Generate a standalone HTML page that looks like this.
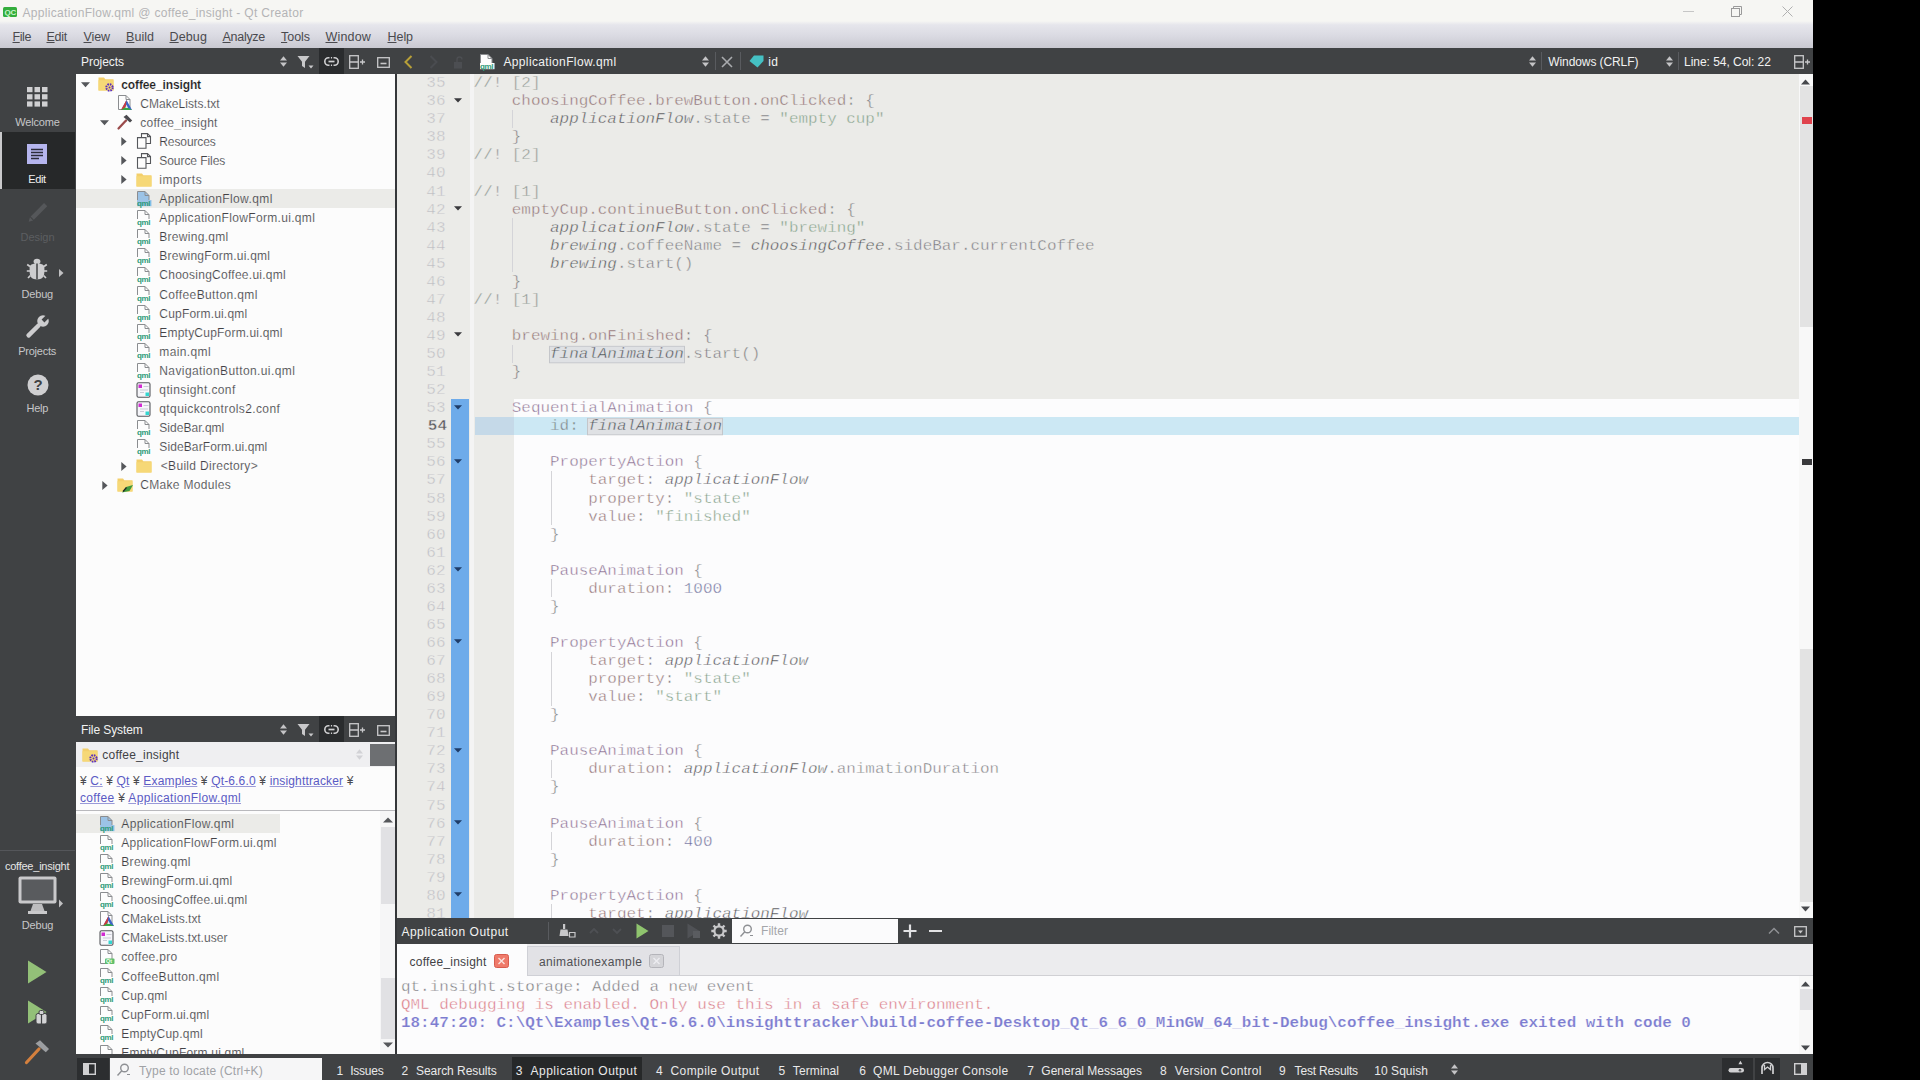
<!DOCTYPE html>
<html lang="en"><head><meta charset="utf-8"><title>ApplicationFlow.qml @ coffee_insight - Qt Creator</title>
<style>
html,body{margin:0;padding:0;background:#000;}
body{width:1920px;height:1080px;overflow:hidden;position:relative;font-family:"Liberation Sans",sans-serif;font-size:12px;}
#win{position:absolute;left:0;top:0;width:1813px;height:1080px;background:#404244;overflow:hidden;}
.a{position:absolute;}
.t{position:absolute;white-space:pre;line-height:16px;font-size:12px;}
.dark{background:#404244;}
svg{position:absolute;overflow:visible;}
.code{position:absolute;white-space:pre;font-family:"Liberation Mono",monospace;font-size:15.93px;line-height:18px;height:18px;transform:scaleY(0.87);transform-origin:0 13.3px;}
.ln{position:absolute;white-space:pre;font-family:"Liberation Mono",monospace;font-size:16px;line-height:18px;height:18px;width:30px;text-align:right;color:#bcbcc2;-webkit-text-stroke:0.45px #ebebe8;transform:scaleY(0.87);transform-origin:0 13.3px;}
i{font-style:italic;}
</style></head><body><div id="win">
<div class="a" style="left:0;top:0;width:1813px;height:24px;background:#f6f6f3;"></div><div class="a" style="left:3px;top:7px;width:14px;height:10px;background:#33ad3c;border-radius:1.5px;"></div><span class="t" style="left:4.5px;top:6.5px;line-height:11px;font-size:8px;font-weight:700;color:#c9f5cd;letter-spacing:-0.3px;">QC</span><span class="t" style="left:22.5px;top:4.5px;color:#b4b4b6;letter-spacing:0.318px;">ApplicationFlow.qml @ coffee_insight - Qt Creator</span><div class="a" style="left:1683px;top:11px;width:11px;height:1px;background:#c6c6c6;"></div><svg style="left:1731px;top:6px" width="12" height="12" viewBox="0 0 12 12" fill="none" stroke="#9a9a9a" stroke-width="1"><rect x="0.5" y="2.5" width="8" height="8"/><path d="M2.5 2.5V0.5H10.5V8.5H8.5"/></svg><svg style="left:1782px;top:6px" width="11" height="11" viewBox="0 0 11 11" fill="none" stroke="#b0b0b0" stroke-width="1"><path d="M0.5 0.5L10.5 10.5M10.5 0.5L0.5 10.5"/></svg><div class="a" style="left:0;top:21px;width:1813px;height:27px;background:linear-gradient(#f6f6f3,#e6e6ec 14%,#dadae2 55%,#c9c9d1);"></div><span class="t" style="left:12.5px;top:29.3px;color:#4a4a4e;font-size:12.5px;letter-spacing:-0.414px;"><u style="text-decoration-thickness:1px;text-underline-offset:1px">F</u>ile</span><span class="t" style="left:46.5px;top:29.3px;color:#4a4a4e;font-size:12.5px;letter-spacing:-0.262px;"><u style="text-decoration-thickness:1px;text-underline-offset:1px">E</u>dit</span><span class="t" style="left:83.5px;top:29.3px;color:#4a4a4e;font-size:12.5px;letter-spacing:-0.094px;"><u style="text-decoration-thickness:1px;text-underline-offset:1px">V</u>iew</span><span class="t" style="left:126.0px;top:29.3px;color:#4a4a4e;font-size:12.5px;letter-spacing:0.041px;"><u style="text-decoration-thickness:1px;text-underline-offset:1px">B</u>uild</span><span class="t" style="left:169.5px;top:29.3px;color:#4a4a4e;font-size:12.5px;letter-spacing:0.131px;"><u style="text-decoration-thickness:1px;text-underline-offset:1px">D</u>ebug</span><span class="t" style="left:222.5px;top:29.3px;color:#4a4a4e;font-size:12.5px;letter-spacing:-0.283px;"><u style="text-decoration-thickness:1px;text-underline-offset:1px">A</u>nalyze</span><span class="t" style="left:281.0px;top:29.3px;color:#4a4a4e;font-size:12.5px;letter-spacing:-0.037px;"><u style="text-decoration-thickness:1px;text-underline-offset:1px">T</u>ools</span><span class="t" style="left:325.5px;top:29.3px;color:#4a4a4e;font-size:12.5px;letter-spacing:0.172px;"><u style="text-decoration-thickness:1px;text-underline-offset:1px">W</u>indow</span><span class="t" style="left:387.5px;top:29.3px;color:#4a4a4e;font-size:12.5px;letter-spacing:-0.055px;"><u style="text-decoration-thickness:1px;text-underline-offset:1px">H</u>elp</span><div class="a dark" style="left:0;top:48px;width:1813px;height:26px;"></div><div class="a dark" style="left:0;top:74px;width:76px;height:1006px;"></div><div class="a" style="left:0;top:132px;width:75px;height:57px;background:#262829;"></div><div class="a" style="left:0;top:132px;width:2px;height:57px;background:#c9c9cb;"></div><svg style="left:27px;top:87px" width="21" height="20" fill="#d0d0d2"><rect x="0.0" y="0.0" width="5.5" height="5.2"/><rect x="7.5" y="0.0" width="5.5" height="5.2"/><rect x="15.0" y="0.0" width="5.5" height="5.2"/><rect x="0.0" y="7.2" width="5.5" height="5.2"/><rect x="7.5" y="7.2" width="5.5" height="5.2"/><rect x="15.0" y="7.2" width="5.5" height="5.2"/><rect x="0.0" y="14.4" width="5.5" height="5.2"/><rect x="7.5" y="14.4" width="5.5" height="5.2"/><rect x="15.0" y="14.4" width="5.5" height="5.2"/></svg><span class="t" style="left:15.3px;top:113.6px;color:#c6c6c8;font-size:11px;letter-spacing:-0.179px;">Welcome</span><svg style="left:27px;top:144px" width="20" height="20"><rect width="20" height="20" fill="#b5b5ee"/><g stroke="#2c2c3a" stroke-width="1.3"><path d="M4 5.5H16M4 8.5H16M4 11.5H16M4 14.5H12"/></g></svg><span class="t" style="left:28.3px;top:171.2px;color:#f0f0f0;font-size:11px;letter-spacing:-0.367px;">Edit</span><svg style="left:24px;top:200px" width="26" height="26" viewBox="0 0 26 26"><g transform="rotate(45 13 13)" fill="#55575a"><rect x="11" y="1" width="4.5" height="19"/><path d="M11 21h4.5l-2.25 4z"/></g></svg><span class="t" style="left:20.5px;top:228.6px;color:#5c5e61;font-size:11px;letter-spacing:-0.042px;">Design</span><svg style="left:26px;top:258px" width="22" height="22" viewBox="0 0 22 22" fill="#cdcdcf"><ellipse cx="11" cy="3.6" rx="3.4" ry="2.8"/><path d="M3.6 9.500Q3.600 5.600 11 5.600Q18.400 5.600 18.400 9.500V14Q18.400 21.500 11 21.500Q3.600 21.500 3.600 14z"/><path d="M11 5.500V21.500" stroke="#404244" stroke-width="1.500"/><g stroke="#cdcdcf" stroke-width="1.700" fill="none"><path d="M4 8.500L1.200 6.500M4 13H0.800M4.500 17.500L2 20M18 8.500l2.800-2M18 13h3.200M17.500 17.500l2.500 2.500"/></g></svg><svg style="left:58.5px;top:269px" width="5" height="8"><path d="M0 0L4.5 4L0 8z" fill="#c0c0c2"/></svg><span class="t" style="left:21.4px;top:285.8px;color:#c6c6c8;font-size:11px;letter-spacing:-0.144px;">Debug</span><svg style="left:25px;top:315px" width="24" height="24" viewBox="0 0 24 24"><g transform="rotate(45 12 12)"><rect x="9.800" y="8" width="4.400" height="18" rx="1.800" fill="#cdcdcf"/><circle cx="12" cy="3.500" r="5.800" fill="#cdcdcf"/><rect x="10" y="-3.500" width="4" height="7" fill="#404244"/></g></svg><span class="t" style="left:18.2px;top:343.0px;color:#c6c6c8;font-size:11px;letter-spacing:-0.244px;">Projects</span><svg style="left:26.500px;top:374px" width="22" height="22" viewBox="0 0 22 22"><circle cx="11" cy="11" r="10.500" fill="#cfcfd1"/><text x="11" y="16.2" text-anchor="middle" font-family="Liberation Sans,sans-serif" font-weight="700" font-size="15" fill="#404244">?</text></svg><span class="t" style="left:26.6px;top:400.4px;color:#c6c6c8;font-size:11px;letter-spacing:-0.281px;">Help</span><div class="a" style="left:0;top:850px;width:75px;height:1px;background:#54565a;"></div><span class="t" style="left:4.9px;top:858.0px;color:#e6e6e6;font-size:11px;letter-spacing:-0.235px;">coffee_insight</span><svg style="left:18px;top:876px" width="46" height="39" viewBox="0 0 46 39"><rect x="0.5" y="0.5" width="38" height="27" rx="2" fill="#c9c9cb"/><rect x="3.5" y="3.5" width="32" height="21" fill="#595b5e"/><path d="M15 28h9l2.5 7H12.5z" fill="#bdbdbf"/><rect x="10" y="35" width="19" height="3" fill="#c9c9cb"/><path d="M41 23.5L45 27.5L41 31.5z" fill="#c0c0c2"/></svg><span class="t" style="left:21.8px;top:916.6px;color:#c6c6c8;font-size:11px;letter-spacing:-0.184px;">Debug</span><svg style="left:27px;top:960px" width="20" height="24"><path d="M1 0.5L19.5 12L1 23.5z" fill="#93c078"/></svg><svg style="left:27px;top:1000px" width="22" height="25"><path d="M1 0.5L19.5 12L1 23.5z" fill="#93c078"/><g fill="#d4d4d6" stroke="#404244" stroke-width="1"><rect x="9" y="13.5" width="11" height="10.5" rx="2"/><rect x="12" y="10.5" width="5" height="4" rx="1.5"/></g><path d="M14.5 14.5V24" stroke="#404244" stroke-width="1.2"/></svg><svg style="left:24px;top:1039px" width="26" height="26" viewBox="0 0 26 26"><path d="M2.5 23.5L15 10" stroke="#d4803e" stroke-width="3.2" stroke-linecap="round"/><path d="M11.5 4.5L16 1.2L25 10L21.8 13.2z" fill="#9c9ea1"/></svg><span class="t" style="left:81.0px;top:53.8px;color:#f2f2f2;letter-spacing:-0.045px;">Projects</span><svg style="left:280.0px;top:56.0px" width="7" height="11" fill="#c4c4c6"><path d="M3.5 0.3L7 4.4H0z"/><path d="M3.5 10.7L7 6.6H0z"/></svg><svg style="left:297px;top:54.5px" width="17" height="14" fill="#c8c8ca"><path d="M0.5 1h12L8 6.8V13L5 11V6.8z"/><path d="M11.5 10.5h5l-2.5 3z"/></svg><div class="a" style="left:319px;top:48px;width:25px;height:26px;background:#2a2c2e;"></div><svg style="left:323.5px;top:57.0px" width="15" height="9" fill="none" stroke="#d0d0d2" stroke-width="1.6"><rect x="0.8" y="0.8" width="13.4" height="7.4" rx="3.7"/><path d="M6.2 0v9M8.800 0v9" stroke="#2a2c2e" stroke-width="1.400"/><path d="M4.500 4.500h6" stroke-width="1.700"/></svg><svg style="left:349px;top:54.5px" width="17" height="14" fill="none" stroke="#c8c8ca" stroke-width="1.3"><rect x="0.7" y="0.7" width="8.6" height="12.6"/><path d="M0.7 7H9.3M11 7h5M13.5 4.5v5"/></svg><svg style="left:376.5px;top:56.5px" width="13" height="11" fill="none" stroke="#c8c8ca" stroke-width="1.3"><rect x="0.7" y="0.7" width="11.6" height="9.6"/><path d="M3.5 6.5h6" stroke-width="1.6"/></svg><div class="a" style="left:76px;top:74px;width:320px;height:642px;background:#fcfcfc;"></div><div class="a" style="left:76px;top:189px;width:320px;height:19px;background:#ebebe8;"></div><svg style="left:80.50px;top:81.85px" width="9" height="5.8"><path d="M0 0.2H9L4.5 5.3z" fill="#55575b"/></svg><svg style="left:98px;top:76px" width="17" height="16" viewBox="0 0 17 16"><path d="M0.5 1.5h5.5l1.3 1.8H15.5V14.5H0.5z" fill="#f3cf6b"/><rect x="0.5" y="4.2" width="15" height="10.3" fill="#f6d877"/><circle cx="11.5" cy="11.5" r="3.2" fill="none" stroke="#5a2fc0" stroke-width="2" stroke-dasharray="1.6 0.9"/><circle cx="11.5" cy="11.5" r="1" fill="#5a2fc0"/></svg><span class="t" style="left:121.3px;top:76.5px;color:#1e1e22;font-weight:700;letter-spacing:-0.119px;-webkit-text-stroke:0.15px #fcfcfc;">coffee_insight</span><svg style="left:117px;top:95px" width="16" height="16" viewBox="0 0 16 16"><path d="M1.5 0.5H9L13 4.5V14.5H1.5z" fill="#fdfdfd" stroke="#8b8d90"/><path d="M9 0.5V4.5H13" fill="none" stroke="#8b8d90"/><path d="M9.5 5L15 15H4z" fill="#3c64c8"/><path d="M9.5 5L4 15H8.2z" fill="#d03a3a"/><path d="M4 15H15L9 11.8z" fill="#38a848"/><path d="M9.5 9.5L11 13H8.3z" fill="#e8e8e8"/></svg><span class="t" style="left:140.3px;top:95.6px;color:#424246;letter-spacing:0.051px;-webkit-text-stroke:0.15px #fcfcfc;">CMakeLists.txt</span><svg style="left:99.50px;top:120.03px" width="9" height="5.8"><path d="M0 0.2H9L4.5 5.3z" fill="#55575b"/></svg><svg style="left:117px;top:114px" width="16" height="16" viewBox="0 0 16 16"><path d="M1.5 14.5L9 6.5" stroke="#9a4a4a" stroke-width="2.2" stroke-linecap="round"/><path d="M6.5 3L9.5 0.8L15.2 6.5L13 8.6z" fill="#4a4a4e"/></svg><span class="t" style="left:140.3px;top:114.7px;color:#424246;letter-spacing:0.254px;-webkit-text-stroke:0.15px #fcfcfc;">coffee_insight</span><svg style="left:120.5px;top:137.26999999999998px" width="6" height="9"><path d="M0.3 0V9L5.6 4.5z" fill="#55575b"/></svg><svg style="left:136px;top:133px" width="16" height="16" viewBox="0 0 16 16" fill="#fdfdfd" stroke="#55575b" stroke-width="1.1"><path d="M5.5 0.6h6l3 3V10.5H5.5z"/><path d="M11.5 0.6v3h3" fill="none"/><path d="M1.5 4.6h6l2.5 0V15.3H1.5z"/></svg><span class="t" style="left:159.3px;top:133.8px;color:#424246;letter-spacing:-0.107px;-webkit-text-stroke:0.15px #fcfcfc;">Resources</span><svg style="left:120.5px;top:156.36px" width="6" height="9"><path d="M0.3 0V9L5.6 4.5z" fill="#55575b"/></svg><svg style="left:136px;top:153px" width="16" height="16" viewBox="0 0 16 16" fill="#fdfdfd" stroke="#55575b" stroke-width="1.1"><path d="M5.5 0.6h6l3 3V10.5H5.5z"/><path d="M11.5 0.6v3h3" fill="none"/><path d="M1.5 4.6h6l2.5 0V15.3H1.5z"/></svg><span class="t" style="left:159.3px;top:152.9px;color:#424246;letter-spacing:-0.067px;-webkit-text-stroke:0.15px #fcfcfc;">Source Files</span><svg style="left:120.5px;top:175.45px" width="6" height="9"><path d="M0.3 0V9L5.6 4.5z" fill="#55575b"/></svg><svg style="left:136px;top:172px" width="17" height="16" viewBox="0 0 17 16"><path d="M0.5 1.5h5.5l1.3 1.8H15.5V14.5H0.5z" fill="#f3cf6b"/><rect x="0.5" y="4.2" width="15" height="10.3" fill="#f6d877"/></svg><span class="t" style="left:159.3px;top:171.9px;color:#424246;letter-spacing:0.508px;-webkit-text-stroke:0.15px #fcfcfc;">imports</span><svg style="left:136px;top:191px" width="16" height="16" viewBox="0 0 16 16"><path d="M1.5 0.5H9L13 4.5V14.5H1.5z" fill="#9cc3e6" stroke="#8b8d90" stroke-width="1"/><path d="M9 0.5V4.5H13" fill="none" stroke="#8b8d90"/><rect x="1" y="9" width="14.5" height="6.2" fill="#9cc3e6"/><text x="1" y="14.6" font-family="Liberation Sans,sans-serif" font-size="8" font-weight="700" fill="#2e9a78" letter-spacing="-0.4">qml</text></svg><span class="t" style="left:159.3px;top:191.0px;color:#424246;letter-spacing:0.386px;-webkit-text-stroke:0.15px #ebebe8;">ApplicationFlow.qml</span><svg style="left:136px;top:210px" width="16" height="16" viewBox="0 0 16 16"><path d="M1.5 0.5H9L13 4.5V14.5H1.5z" fill="#fdfdfd" stroke="#8b8d90" stroke-width="1"/><path d="M9 0.5V4.5H13" fill="none" stroke="#8b8d90"/><rect x="1" y="9" width="14.5" height="6.2" fill="#fdfdfd"/><text x="1" y="14.6" font-family="Liberation Sans,sans-serif" font-size="8" font-weight="700" fill="#2e9a78" letter-spacing="-0.4">qml</text></svg><span class="t" style="left:159.3px;top:210.1px;color:#424246;letter-spacing:0.327px;-webkit-text-stroke:0.15px #fcfcfc;">ApplicationFlowForm.ui.qml</span><svg style="left:136px;top:229px" width="16" height="16" viewBox="0 0 16 16"><path d="M1.5 0.5H9L13 4.5V14.5H1.5z" fill="#fdfdfd" stroke="#8b8d90" stroke-width="1"/><path d="M9 0.5V4.5H13" fill="none" stroke="#8b8d90"/><rect x="1" y="9" width="14.5" height="6.2" fill="#fdfdfd"/><text x="1" y="14.6" font-family="Liberation Sans,sans-serif" font-size="8" font-weight="700" fill="#2e9a78" letter-spacing="-0.4">qml</text></svg><span class="t" style="left:159.3px;top:229.2px;color:#424246;letter-spacing:0.288px;-webkit-text-stroke:0.15px #fcfcfc;">Brewing.qml</span><svg style="left:136px;top:248px" width="16" height="16" viewBox="0 0 16 16"><path d="M1.5 0.5H9L13 4.5V14.5H1.5z" fill="#fdfdfd" stroke="#8b8d90" stroke-width="1"/><path d="M9 0.5V4.5H13" fill="none" stroke="#8b8d90"/><rect x="1" y="9" width="14.5" height="6.2" fill="#fdfdfd"/><text x="1" y="14.6" font-family="Liberation Sans,sans-serif" font-size="8" font-weight="700" fill="#2e9a78" letter-spacing="-0.4">qml</text></svg><span class="t" style="left:159.3px;top:248.3px;color:#424246;letter-spacing:0.233px;-webkit-text-stroke:0.15px #fcfcfc;">BrewingForm.ui.qml</span><svg style="left:136px;top:267px" width="16" height="16" viewBox="0 0 16 16"><path d="M1.5 0.5H9L13 4.5V14.5H1.5z" fill="#fdfdfd" stroke="#8b8d90" stroke-width="1"/><path d="M9 0.5V4.5H13" fill="none" stroke="#8b8d90"/><rect x="1" y="9" width="14.5" height="6.2" fill="#fdfdfd"/><text x="1" y="14.6" font-family="Liberation Sans,sans-serif" font-size="8" font-weight="700" fill="#2e9a78" letter-spacing="-0.4">qml</text></svg><span class="t" style="left:159.3px;top:267.4px;color:#424246;letter-spacing:0.262px;-webkit-text-stroke:0.15px #fcfcfc;">ChoosingCoffee.ui.qml</span><svg style="left:136px;top:286px" width="16" height="16" viewBox="0 0 16 16"><path d="M1.5 0.5H9L13 4.5V14.5H1.5z" fill="#fdfdfd" stroke="#8b8d90" stroke-width="1"/><path d="M9 0.5V4.5H13" fill="none" stroke="#8b8d90"/><rect x="1" y="9" width="14.5" height="6.2" fill="#fdfdfd"/><text x="1" y="14.6" font-family="Liberation Sans,sans-serif" font-size="8" font-weight="700" fill="#2e9a78" letter-spacing="-0.4">qml</text></svg><span class="t" style="left:159.3px;top:286.5px;color:#424246;letter-spacing:0.368px;-webkit-text-stroke:0.15px #fcfcfc;">CoffeeButton.qml</span><svg style="left:136px;top:305px" width="16" height="16" viewBox="0 0 16 16"><path d="M1.5 0.5H9L13 4.5V14.5H1.5z" fill="#fdfdfd" stroke="#8b8d90" stroke-width="1"/><path d="M9 0.5V4.5H13" fill="none" stroke="#8b8d90"/><rect x="1" y="9" width="14.5" height="6.2" fill="#fdfdfd"/><text x="1" y="14.6" font-family="Liberation Sans,sans-serif" font-size="8" font-weight="700" fill="#2e9a78" letter-spacing="-0.4">qml</text></svg><span class="t" style="left:159.3px;top:305.6px;color:#424246;letter-spacing:0.189px;-webkit-text-stroke:0.15px #fcfcfc;">CupForm.ui.qml</span><svg style="left:136px;top:324px" width="16" height="16" viewBox="0 0 16 16"><path d="M1.5 0.5H9L13 4.5V14.5H1.5z" fill="#fdfdfd" stroke="#8b8d90" stroke-width="1"/><path d="M9 0.5V4.5H13" fill="none" stroke="#8b8d90"/><rect x="1" y="9" width="14.5" height="6.2" fill="#fdfdfd"/><text x="1" y="14.6" font-family="Liberation Sans,sans-serif" font-size="8" font-weight="700" fill="#2e9a78" letter-spacing="-0.4">qml</text></svg><span class="t" style="left:159.3px;top:324.7px;color:#424246;letter-spacing:0.212px;-webkit-text-stroke:0.15px #fcfcfc;">EmptyCupForm.ui.qml</span><svg style="left:136px;top:343px" width="16" height="16" viewBox="0 0 16 16"><path d="M1.5 0.5H9L13 4.5V14.5H1.5z" fill="#fdfdfd" stroke="#8b8d90" stroke-width="1"/><path d="M9 0.5V4.5H13" fill="none" stroke="#8b8d90"/><rect x="1" y="9" width="14.5" height="6.2" fill="#fdfdfd"/><text x="1" y="14.6" font-family="Liberation Sans,sans-serif" font-size="8" font-weight="700" fill="#2e9a78" letter-spacing="-0.4">qml</text></svg><span class="t" style="left:159.3px;top:343.8px;color:#424246;letter-spacing:0.377px;-webkit-text-stroke:0.15px #fcfcfc;">main.qml</span><svg style="left:136px;top:363px" width="16" height="16" viewBox="0 0 16 16"><path d="M1.5 0.5H9L13 4.5V14.5H1.5z" fill="#fdfdfd" stroke="#8b8d90" stroke-width="1"/><path d="M9 0.5V4.5H13" fill="none" stroke="#8b8d90"/><rect x="1" y="9" width="14.5" height="6.2" fill="#fdfdfd"/><text x="1" y="14.6" font-family="Liberation Sans,sans-serif" font-size="8" font-weight="700" fill="#2e9a78" letter-spacing="-0.4">qml</text></svg><span class="t" style="left:159.3px;top:362.9px;color:#424246;letter-spacing:0.398px;-webkit-text-stroke:0.15px #fcfcfc;">NavigationButton.ui.qml</span><svg style="left:136px;top:382px" width="16" height="16" viewBox="0 0 16 16"><rect x="1" y="0.8" width="13" height="14.4" rx="1.5" fill="#f6f6fa" stroke="#55575b" stroke-width="1.1"/><rect x="2.5" y="2.5" width="3.5" height="3.5" fill="#d22ad2"/><rect x="9.5" y="10.5" width="3.5" height="3.5" fill="#32d6d0"/><path d="M4 8h8M4 10.5h4M7.5 4.5h5" stroke="#c9cbd6" stroke-width="1"/></svg><span class="t" style="left:159.3px;top:381.9px;color:#424246;letter-spacing:0.406px;-webkit-text-stroke:0.15px #fcfcfc;">qtinsight.conf</span><svg style="left:136px;top:401px" width="16" height="16" viewBox="0 0 16 16"><rect x="1" y="0.8" width="13" height="14.4" rx="1.5" fill="#f6f6fa" stroke="#55575b" stroke-width="1.1"/><rect x="2.5" y="2.5" width="3.5" height="3.5" fill="#d22ad2"/><rect x="9.5" y="10.5" width="3.5" height="3.5" fill="#32d6d0"/><path d="M4 8h8M4 10.5h4M7.5 4.5h5" stroke="#c9cbd6" stroke-width="1"/></svg><span class="t" style="left:159.3px;top:401.0px;color:#424246;letter-spacing:0.389px;-webkit-text-stroke:0.15px #fcfcfc;">qtquickcontrols2.conf</span><svg style="left:136px;top:420px" width="16" height="16" viewBox="0 0 16 16"><path d="M1.5 0.5H9L13 4.5V14.5H1.5z" fill="#fdfdfd" stroke="#8b8d90" stroke-width="1"/><path d="M9 0.5V4.5H13" fill="none" stroke="#8b8d90"/><rect x="1" y="9" width="14.5" height="6.2" fill="#fdfdfd"/><text x="1" y="14.6" font-family="Liberation Sans,sans-serif" font-size="8" font-weight="700" fill="#2e9a78" letter-spacing="-0.4">qml</text></svg><span class="t" style="left:159.3px;top:420.1px;color:#424246;letter-spacing:0.027px;-webkit-text-stroke:0.15px #fcfcfc;">SideBar.qml</span><svg style="left:136px;top:439px" width="16" height="16" viewBox="0 0 16 16"><path d="M1.5 0.5H9L13 4.5V14.5H1.5z" fill="#fdfdfd" stroke="#8b8d90" stroke-width="1"/><path d="M9 0.5V4.5H13" fill="none" stroke="#8b8d90"/><rect x="1" y="9" width="14.5" height="6.2" fill="#fdfdfd"/><text x="1" y="14.6" font-family="Liberation Sans,sans-serif" font-size="8" font-weight="700" fill="#2e9a78" letter-spacing="-0.4">qml</text></svg><span class="t" style="left:159.3px;top:439.2px;color:#424246;letter-spacing:0.109px;-webkit-text-stroke:0.15px #fcfcfc;">SideBarForm.ui.qml</span><svg style="left:120.5px;top:461.8px" width="6" height="9"><path d="M0.3 0V9L5.6 4.5z" fill="#55575b"/></svg><svg style="left:136px;top:458px" width="17" height="16" viewBox="0 0 17 16"><path d="M0.5 1.5h5.5l1.3 1.8H15.5V14.5H0.5z" fill="#f3cf6b"/><rect x="0.5" y="4.2" width="15" height="10.3" fill="#f6d877"/></svg><span class="t" style="left:160.8px;top:458.3px;color:#424246;letter-spacing:0.303px;-webkit-text-stroke:0.15px #fcfcfc;">&lt;Build Directory&gt;</span><svg style="left:101.5px;top:480.89px" width="6" height="9"><path d="M0.3 0V9L5.6 4.5z" fill="#55575b"/></svg><svg style="left:117px;top:477px" width="17" height="16" viewBox="0 0 17 16"><path d="M0.5 1.5h5.5l1.3 1.8H15.5V14.5H0.5z" fill="#f3cf6b"/><rect x="0.5" y="4.2" width="15" height="10.3" fill="#f6d877"/><path d="M5 15.5l4-5.5 7-2-3.5 6z" fill="#3f9a3f"/><path d="M6 14.5l3.5-4" stroke="#222" stroke-width="1.2"/></svg><span class="t" style="left:140.3px;top:477.4px;color:#424246;letter-spacing:0.307px;-webkit-text-stroke:0.15px #fcfcfc;">CMake Modules</span><div class="a dark" style="left:76px;top:716px;width:320px;height:26px;"></div><span class="t" style="left:81.0px;top:721.8px;color:#f2f2f2;letter-spacing:-0.090px;">File System</span><svg style="left:280.0px;top:724.0px" width="7" height="11" fill="#c4c4c6"><path d="M3.5 0.3L7 4.4H0z"/><path d="M3.5 10.7L7 6.6H0z"/></svg><svg style="left:297px;top:722.5px" width="17" height="14" fill="#c8c8ca"><path d="M0.5 1h12L8 6.8V13L5 11V6.8z"/><path d="M11.5 10.5h5l-2.5 3z"/></svg><div class="a" style="left:319px;top:716px;width:25px;height:26px;background:#2a2c2e;"></div><svg style="left:323.5px;top:725.0px" width="15" height="9" fill="none" stroke="#d0d0d2" stroke-width="1.6"><rect x="0.8" y="0.8" width="13.4" height="7.4" rx="3.7"/><path d="M6.2 0v9M8.800 0v9" stroke="#2a2c2e" stroke-width="1.400"/><path d="M4.500 4.500h6" stroke-width="1.700"/></svg><svg style="left:349px;top:722.5px" width="17" height="14" fill="none" stroke="#c8c8ca" stroke-width="1.3"><rect x="0.7" y="0.7" width="8.6" height="12.6"/><path d="M0.7 7H9.3M11 7h5M13.5 4.5v5"/></svg><svg style="left:376.5px;top:724.5px" width="13" height="11" fill="none" stroke="#c8c8ca" stroke-width="1.3"><rect x="0.7" y="0.7" width="11.6" height="9.6"/><path d="M3.5 6.5h6" stroke-width="1.6"/></svg><div class="a" style="left:76px;top:742px;width:320px;height:25px;background:#efeff1;"></div><svg style="left:82px;top:747px" width="17" height="16" viewBox="0 0 17 16"><path d="M0.5 1.5h5.5l1.3 1.8H15.5V14.5H0.5z" fill="#f3cf6b"/><rect x="0.5" y="4.2" width="15" height="10.3" fill="#f6d877"/><circle cx="11.5" cy="11.5" r="3.2" fill="none" stroke="#5a2fc0" stroke-width="2" stroke-dasharray="1.6 0.9"/><circle cx="11.5" cy="11.5" r="1" fill="#5a2fc0"/></svg><span class="t" style="left:102.3px;top:747.2px;color:#424246;letter-spacing:0.225px;">coffee_insight</span><svg style="left:356.0px;top:749.0px" width="7" height="11" fill="#d2d2d6"><path d="M3.5 0.3L7 4.4H0z"/><path d="M3.5 10.7L7 6.6H0z"/></svg><div class="a" style="left:370px;top:744px;width:26px;height:22px;background:#6d6f72;"></div><div class="a" style="left:76px;top:767px;width:320px;height:44px;background:#fcfcfc;"></div><span class="t" style="left:80.0px;top:772.7px;color:#4a4a4e;letter-spacing:0.161px;">¥ <span style="color:#5a5ac4;text-decoration:underline;text-decoration-color:#9a9ad8">C:</span> ¥ <span style="color:#5a5ac4;text-decoration:underline;text-decoration-color:#9a9ad8">Qt</span> ¥ <span style="color:#5a5ac4;text-decoration:underline;text-decoration-color:#9a9ad8">Examples</span> ¥ <span style="color:#5a5ac4;text-decoration:underline;text-decoration-color:#9a9ad8">Qt-6.6.0</span> ¥ <span style="color:#5a5ac4;text-decoration:underline;text-decoration-color:#9a9ad8">insighttracker</span> ¥</span><span class="t" style="left:80.0px;top:790.0px;color:#4a4a4e;letter-spacing:0.350px;"><span style="color:#5a5ac4;text-decoration:underline;text-decoration-color:#9a9ad8">coffee</span> ¥ <span style="color:#5a5ac4;text-decoration:underline;text-decoration-color:#9a9ad8">ApplicationFlow.qml</span></span><div class="a" style="left:76px;top:810px;width:320px;height:1px;background:#b9b9bd;"></div><div class="a" style="left:76px;top:811px;width:320px;height:244px;background:#fcfcfc;overflow:hidden;"></div><div class="a" style="left:76px;top:814px;width:204px;height:19px;background:#ebebe8;"></div><div class="a" style="left:76px;top:811px;width:304px;height:244px;overflow:hidden;"><svg style="left:23px;top:5px" width="16" height="16" viewBox="0 0 16 16"><path d="M1.5 0.5H9L13 4.5V14.5H1.5z" fill="#9cc3e6" stroke="#8b8d90" stroke-width="1"/><path d="M9 0.5V4.5H13" fill="none" stroke="#8b8d90"/><rect x="1" y="9" width="14.5" height="6.2" fill="#9cc3e6"/><text x="1" y="14.6" font-family="Liberation Sans,sans-serif" font-size="8" font-weight="700" fill="#2e9a78" letter-spacing="-0.4">qml</text></svg><span class="t" style="left:45.3px;top:4.8px;color:#424246;letter-spacing:0.365px;-webkit-text-stroke:0.15px #ebebe8;">ApplicationFlow.qml</span><svg style="left:23px;top:24px" width="16" height="16" viewBox="0 0 16 16"><path d="M1.5 0.5H9L13 4.5V14.5H1.5z" fill="#fdfdfd" stroke="#8b8d90" stroke-width="1"/><path d="M9 0.5V4.5H13" fill="none" stroke="#8b8d90"/><rect x="1" y="9" width="14.5" height="6.2" fill="#fdfdfd"/><text x="1" y="14.6" font-family="Liberation Sans,sans-serif" font-size="8" font-weight="700" fill="#2e9a78" letter-spacing="-0.4">qml</text></svg><span class="t" style="left:45.3px;top:23.9px;color:#424246;letter-spacing:0.312px;-webkit-text-stroke:0.15px #fcfcfc;">ApplicationFlowForm.ui.qml</span><svg style="left:23px;top:43px" width="16" height="16" viewBox="0 0 16 16"><path d="M1.5 0.5H9L13 4.5V14.5H1.5z" fill="#fdfdfd" stroke="#8b8d90" stroke-width="1"/><path d="M9 0.5V4.5H13" fill="none" stroke="#8b8d90"/><rect x="1" y="9" width="14.5" height="6.2" fill="#fdfdfd"/><text x="1" y="14.6" font-family="Liberation Sans,sans-serif" font-size="8" font-weight="700" fill="#2e9a78" letter-spacing="-0.4">qml</text></svg><span class="t" style="left:45.3px;top:43.0px;color:#424246;letter-spacing:0.306px;-webkit-text-stroke:0.15px #fcfcfc;">Brewing.qml</span><svg style="left:23px;top:62px" width="16" height="16" viewBox="0 0 16 16"><path d="M1.5 0.5H9L13 4.5V14.5H1.5z" fill="#fdfdfd" stroke="#8b8d90" stroke-width="1"/><path d="M9 0.5V4.5H13" fill="none" stroke="#8b8d90"/><rect x="1" y="9" width="14.5" height="6.2" fill="#fdfdfd"/><text x="1" y="14.6" font-family="Liberation Sans,sans-serif" font-size="8" font-weight="700" fill="#2e9a78" letter-spacing="-0.4">qml</text></svg><span class="t" style="left:45.3px;top:62.1px;color:#424246;letter-spacing:0.239px;-webkit-text-stroke:0.15px #fcfcfc;">BrewingForm.ui.qml</span><svg style="left:23px;top:81px" width="16" height="16" viewBox="0 0 16 16"><path d="M1.5 0.5H9L13 4.5V14.5H1.5z" fill="#fdfdfd" stroke="#8b8d90" stroke-width="1"/><path d="M9 0.5V4.5H13" fill="none" stroke="#8b8d90"/><rect x="1" y="9" width="14.5" height="6.2" fill="#fdfdfd"/><text x="1" y="14.6" font-family="Liberation Sans,sans-serif" font-size="8" font-weight="700" fill="#2e9a78" letter-spacing="-0.4">qml</text></svg><span class="t" style="left:45.3px;top:81.2px;color:#424246;letter-spacing:0.229px;-webkit-text-stroke:0.15px #fcfcfc;">ChoosingCoffee.ui.qml</span><svg style="left:23px;top:100px" width="16" height="16" viewBox="0 0 16 16"><path d="M1.5 0.5H9L13 4.5V14.5H1.5z" fill="#fdfdfd" stroke="#8b8d90"/><path d="M9 0.5V4.5H13" fill="none" stroke="#8b8d90"/><path d="M9.5 5L15 15H4z" fill="#3c64c8"/><path d="M9.5 5L4 15H8.2z" fill="#d03a3a"/><path d="M4 15H15L9 11.8z" fill="#38a848"/><path d="M9.5 9.5L11 13H8.3z" fill="#e8e8e8"/></svg><span class="t" style="left:45.3px;top:100.2px;color:#424246;letter-spacing:0.072px;-webkit-text-stroke:0.15px #fcfcfc;">CMakeLists.txt</span><svg style="left:23px;top:119px" width="16" height="16" viewBox="0 0 16 16"><rect x="1" y="0.8" width="13" height="14.4" rx="1.5" fill="#f6f6fa" stroke="#55575b" stroke-width="1.1"/><rect x="2.5" y="2.5" width="3.5" height="3.5" fill="#d22ad2"/><rect x="9.5" y="10.5" width="3.5" height="3.5" fill="#32d6d0"/><path d="M4 8h8M4 10.5h4M7.5 4.5h5" stroke="#c9cbd6" stroke-width="1"/></svg><span class="t" style="left:45.3px;top:119.3px;color:#424246;letter-spacing:0.043px;-webkit-text-stroke:0.15px #fcfcfc;">CMakeLists.txt.user</span><svg style="left:23px;top:138px" width="16" height="16" viewBox="0 0 16 16"><path d="M1.5 0.5H9L13 4.5V14.5H1.5z" fill="#fdfdfd" stroke="#8b8d90"/><path d="M9 0.5V4.5H13" fill="none" stroke="#8b8d90"/><rect x="6" y="9.5" width="9.5" height="5.5" rx="1" fill="#5fbf6a"/><text x="7" y="14.2" font-family="Liberation Sans,sans-serif" font-size="5.5" font-weight="700" fill="#eaffea">Qt</text></svg><span class="t" style="left:45.3px;top:138.4px;color:#424246;letter-spacing:0.304px;-webkit-text-stroke:0.15px #fcfcfc;">coffee.pro</span><svg style="left:23px;top:157px" width="16" height="16" viewBox="0 0 16 16"><path d="M1.5 0.5H9L13 4.5V14.5H1.5z" fill="#fdfdfd" stroke="#8b8d90" stroke-width="1"/><path d="M9 0.5V4.5H13" fill="none" stroke="#8b8d90"/><rect x="1" y="9" width="14.5" height="6.2" fill="#fdfdfd"/><text x="1" y="14.6" font-family="Liberation Sans,sans-serif" font-size="8" font-weight="700" fill="#2e9a78" letter-spacing="-0.4">qml</text></svg><span class="t" style="left:45.3px;top:157.5px;color:#424246;letter-spacing:0.355px;-webkit-text-stroke:0.15px #fcfcfc;">CoffeeButton.qml</span><svg style="left:23px;top:176px" width="16" height="16" viewBox="0 0 16 16"><path d="M1.5 0.5H9L13 4.5V14.5H1.5z" fill="#fdfdfd" stroke="#8b8d90" stroke-width="1"/><path d="M9 0.5V4.5H13" fill="none" stroke="#8b8d90"/><rect x="1" y="9" width="14.5" height="6.2" fill="#fdfdfd"/><text x="1" y="14.6" font-family="Liberation Sans,sans-serif" font-size="8" font-weight="700" fill="#2e9a78" letter-spacing="-0.4">qml</text></svg><span class="t" style="left:45.3px;top:176.6px;color:#424246;letter-spacing:0.188px;-webkit-text-stroke:0.15px #fcfcfc;">Cup.qml</span><svg style="left:23px;top:195px" width="16" height="16" viewBox="0 0 16 16"><path d="M1.5 0.5H9L13 4.5V14.5H1.5z" fill="#fdfdfd" stroke="#8b8d90" stroke-width="1"/><path d="M9 0.5V4.5H13" fill="none" stroke="#8b8d90"/><rect x="1" y="9" width="14.5" height="6.2" fill="#fdfdfd"/><text x="1" y="14.6" font-family="Liberation Sans,sans-serif" font-size="8" font-weight="700" fill="#2e9a78" letter-spacing="-0.4">qml</text></svg><span class="t" style="left:45.3px;top:195.7px;color:#424246;letter-spacing:0.189px;-webkit-text-stroke:0.15px #fcfcfc;">CupForm.ui.qml</span><svg style="left:23px;top:214px" width="16" height="16" viewBox="0 0 16 16"><path d="M1.5 0.5H9L13 4.5V14.5H1.5z" fill="#fdfdfd" stroke="#8b8d90" stroke-width="1"/><path d="M9 0.5V4.5H13" fill="none" stroke="#8b8d90"/><rect x="1" y="9" width="14.5" height="6.2" fill="#fdfdfd"/><text x="1" y="14.6" font-family="Liberation Sans,sans-serif" font-size="8" font-weight="700" fill="#2e9a78" letter-spacing="-0.4">qml</text></svg><span class="t" style="left:45.3px;top:214.8px;color:#424246;letter-spacing:0.241px;-webkit-text-stroke:0.15px #fcfcfc;">EmptyCup.qml</span><svg style="left:23px;top:234px" width="16" height="16" viewBox="0 0 16 16"><path d="M1.5 0.5H9L13 4.5V14.5H1.5z" fill="#fdfdfd" stroke="#8b8d90" stroke-width="1"/><path d="M9 0.5V4.5H13" fill="none" stroke="#8b8d90"/><rect x="1" y="9" width="14.5" height="6.2" fill="#fdfdfd"/><text x="1" y="14.6" font-family="Liberation Sans,sans-serif" font-size="8" font-weight="700" fill="#2e9a78" letter-spacing="-0.4">qml</text></svg><span class="t" style="left:45.3px;top:233.9px;color:#424246;letter-spacing:0.201px;-webkit-text-stroke:0.15px #fcfcfc;">EmptyCupForm.ui.qml</span></div><div class="a" style="left:380px;top:811px;width:15px;height:244px;background:#f6f6f7;"></div><div class="a" style="left:381px;top:827px;width:14px;height:77px;background:#e1e1e4;"></div><div class="a" style="left:381px;top:978px;width:14px;height:61px;background:#e1e1e4;"></div><svg style="left:383px;top:817px" width="10" height="6"><path d="M0 5.5L5 0.5L10 5.5z" fill="#55575b"/></svg><svg style="left:383px;top:1042px" width="10" height="6"><path d="M0 0.5L5 5.5L10 0.5z" fill="#55575b"/></svg><div class="a" style="left:395px;top:74px;width:2px;height:981px;background:#35373a;"></div><svg style="left:404px;top:55px" width="9" height="14" fill="none" stroke="#b8a038" stroke-width="2"><path d="M7.500 1L1.500 7L7.500 13"/></svg><svg style="left:429px;top:55px" width="9" height="14" fill="none" stroke="#4a4c50" stroke-width="2"><path d="M1.5 1L7.5 7L1.5 13"/></svg><svg style="left:453px;top:56px" width="11" height="13" fill="#4c4e52"><rect x="1" y="6" width="8" height="6.500"/><path d="M4 6V3.500a2.500 2.500 0 0 1 5 0" fill="none" stroke="#4c4e52" stroke-width="1.400"/></svg><svg style="left:479px;top:54px" width="16" height="16" viewBox="0 0 16 16"><path d="M1.5 0.5H9L13 4.5V14.5H1.5z" fill="#fdfdfd" stroke="#8b8d90" stroke-width="1"/><path d="M9 0.5V4.5H13" fill="none" stroke="#8b8d90"/><rect x="1" y="9" width="14.5" height="6.2" fill="#fdfdfd"/><text x="1" y="14.6" font-family="Liberation Sans,sans-serif" font-size="8" font-weight="700" fill="#2e9a78" letter-spacing="-0.4">qml</text></svg><span class="t" style="left:503.4px;top:53.8px;color:#f2f2f2;letter-spacing:0.370px;">ApplicationFlow.qml</span><svg style="left:701.5px;top:56.0px" width="7" height="11" fill="#c4c4c6"><path d="M3.5 0.3L7 4.4H0z"/><path d="M3.5 10.7L7 6.6H0z"/></svg><div class="a" style="left:715px;top:52px;width:1px;height:18px;background:#595b5f;"></div><svg style="left:721px;top:56px" width="12" height="12" fill="none" stroke="#a9abae" stroke-width="1.6"><path d="M1 1L11 11M11 1L1 11"/></svg><div class="a" style="left:740px;top:52px;width:1px;height:18px;background:#595b5f;"></div><svg style="left:749px;top:55px" width="15" height="13"><path d="M5 0.5L14.5 0.5L14.5 6L8.5 12.5L0.5 6z" fill="#45c1c4" transform="rotate(0)"/></svg><span class="t" style="left:768.3px;top:53.8px;color:#f2f2f2;letter-spacing:0.378px;">id</span><svg style="left:1529.0px;top:56.0px" width="7" height="11" fill="#c4c4c6"><path d="M3.5 0.3L7 4.4H0z"/><path d="M3.5 10.7L7 6.6H0z"/></svg><div class="a" style="left:1541px;top:52px;width:1px;height:18px;background:#595b5f;"></div><span class="t" style="left:1548.3px;top:53.8px;color:#f2f2f2;letter-spacing:-0.096px;">Windows (CRLF)</span><svg style="left:1666.0px;top:56.0px" width="7" height="11" fill="#c4c4c6"><path d="M3.5 0.3L7 4.4H0z"/><path d="M3.5 10.7L7 6.6H0z"/></svg><div class="a" style="left:1678px;top:52px;width:1px;height:18px;background:#595b5f;"></div><span class="t" style="left:1684.0px;top:53.8px;color:#f2f2f2;letter-spacing:-0.036px;">Line: 54, Col: 22</span><svg style="left:1793.5px;top:54.5px" width="17" height="14" fill="none" stroke="#c8c8ca" stroke-width="1.3"><rect x="0.7" y="0.7" width="8.6" height="12.6"/><path d="M0.7 7H9.3M11 7h5M13.5 4.5v5"/></svg><div class="a" style="left:397px;top:74px;width:1416px;height:844px;background:#ebebe8;overflow:hidden;" id="ed"><div class="a" style="left:117px;top:325px;width:1285px;height:519px;background:#fcfcfd;"></div><div class="a" style="left:54px;top:325px;width:18px;height:519px;background:#6eabea;"></div><div class="a" style="left:73px;top:0;width:4px;height:844px;background:#f4f4f4;"></div><div class="a" style="left:78px;top:343px;width:39px;height:18px;background:#c5d9e8;"></div><div class="a" style="left:117px;top:343px;width:1285px;height:18px;background:#cce8f4;"></div><div class="a" style="left:115.3px;top:35.8px;width:1px;height:18.1px;background:#d4d4d8;"></div><div class="a" style="left:115.3px;top:144.2px;width:1px;height:54.2px;background:#d4d4d8;"></div><div class="a" style="left:115.3px;top:270.6px;width:1px;height:18.1px;background:#d4d4d8;"></div><div class="a" style="left:153.6px;top:397.0px;width:1px;height:54.2px;background:#d4d4d8;"></div><div class="a" style="left:153.6px;top:505.4px;width:1px;height:18.1px;background:#d4d4d8;"></div><div class="a" style="left:153.6px;top:577.6px;width:1px;height:54.2px;background:#d4d4d8;"></div><div class="a" style="left:153.6px;top:686.0px;width:1px;height:18.1px;background:#d4d4d8;"></div><div class="a" style="left:153.6px;top:758.2px;width:1px;height:18.1px;background:#d4d4d8;"></div><div class="a" style="left:153.6px;top:830.4px;width:1px;height:18.1px;background:#d4d4d8;"></div><span class="ln" style="left:18.5px;top:0.1px;">35</span><span class="code" style="left:76.60000000000002px;top:0.1px;-webkit-text-stroke:0.45px #ebebe8;"><span style="color:#85908a">//! [2]</span></span><span class="ln" style="left:18.5px;top:18.2px;">36</span><svg style="left:57.20px;top:23.66px" width="8" height="4.9"><path d="M0 0.2H8L4.0 4.4z" fill="#3a3a3e"/></svg><span class="code" style="left:76.60000000000002px;top:18.2px;-webkit-text-stroke:0.45px #ebebe8;"><span style="color:#8a6a6c">    choosingCoffee.brewButton.onClicked</span><span style="color:#77777b">: {</span></span><span class="ln" style="left:18.5px;top:36.2px;">37</span><span class="code" style="left:76.60000000000002px;top:36.2px;-webkit-text-stroke:0.45px #ebebe8;">        <i style="color:#4a4a4e">applicationFlow</i><span style="color:#77777b">.state = </span><span style="color:#7a9a80">"empty cup"</span></span><span class="ln" style="left:18.5px;top:54.3px;">38</span><span class="code" style="left:76.60000000000002px;top:54.3px;-webkit-text-stroke:0.45px #ebebe8;"><span style="color:#77777b">    }</span></span><span class="ln" style="left:18.5px;top:72.3px;">39</span><span class="code" style="left:76.60000000000002px;top:72.3px;-webkit-text-stroke:0.45px #ebebe8;"><span style="color:#85908a">//! [2]</span></span><span class="ln" style="left:18.5px;top:90.4px;">40</span><span class="ln" style="left:18.5px;top:108.5px;">41</span><span class="code" style="left:76.60000000000002px;top:108.5px;-webkit-text-stroke:0.45px #ebebe8;"><span style="color:#85908a">//! [1]</span></span><span class="ln" style="left:18.5px;top:126.5px;">42</span><svg style="left:57.20px;top:132.02px" width="8" height="4.9"><path d="M0 0.2H8L4.0 4.4z" fill="#3a3a3e"/></svg><span class="code" style="left:76.60000000000002px;top:126.5px;-webkit-text-stroke:0.45px #ebebe8;"><span style="color:#8a6a6c">    emptyCup.continueButton.onClicked</span><span style="color:#77777b">: {</span></span><span class="ln" style="left:18.5px;top:144.6px;">43</span><span class="code" style="left:76.60000000000002px;top:144.6px;-webkit-text-stroke:0.45px #ebebe8;">        <i style="color:#4a4a4e">applicationFlow</i><span style="color:#77777b">.state = </span><span style="color:#7a9a80">"brewing"</span></span><span class="ln" style="left:18.5px;top:162.6px;">44</span><span class="code" style="left:76.60000000000002px;top:162.6px;-webkit-text-stroke:0.45px #ebebe8;">        <i style="color:#4a4a4e">brewing</i><span style="color:#77777b">.coffeeName = </span><i style="color:#4a4a4e">choosingCoffee</i><span style="color:#77777b">.sideBar.currentCoffee</span></span><span class="ln" style="left:18.5px;top:180.7px;">45</span><span class="code" style="left:76.60000000000002px;top:180.7px;-webkit-text-stroke:0.45px #ebebe8;">        <i style="color:#4a4a4e">brewing</i><span style="color:#77777b">.start()</span></span><span class="ln" style="left:18.5px;top:198.8px;">46</span><span class="code" style="left:76.60000000000002px;top:198.8px;-webkit-text-stroke:0.45px #ebebe8;"><span style="color:#77777b">    }</span></span><span class="ln" style="left:18.5px;top:216.8px;">47</span><span class="code" style="left:76.60000000000002px;top:216.8px;-webkit-text-stroke:0.45px #ebebe8;"><span style="color:#85908a">//! [1]</span></span><span class="ln" style="left:18.5px;top:234.9px;">48</span><span class="ln" style="left:18.5px;top:252.9px;">49</span><svg style="left:57.20px;top:258.44px" width="8" height="4.9"><path d="M0 0.2H8L4.0 4.4z" fill="#3a3a3e"/></svg><span class="code" style="left:76.60000000000002px;top:252.9px;-webkit-text-stroke:0.45px #ebebe8;"><span style="color:#8a6a6c">    brewing.onFinished</span><span style="color:#77777b">: {</span></span><span class="ln" style="left:18.5px;top:271.0px;">50</span><span class="code" style="left:76.60000000000002px;top:271.0px;-webkit-text-stroke:0.45px #ebebe8;"><span style="color:#77777b">        </span><i style="color:#4a4a4e;background:#dfe1e4;box-shadow:0 0 0 1px #c4c6ca;-webkit-text-stroke:0.45px #dfe1e4;">finalAnimation</i><span style="color:#77777b">.start()</span></span><span class="ln" style="left:18.5px;top:289.1px;">51</span><span class="code" style="left:76.60000000000002px;top:289.1px;-webkit-text-stroke:0.45px #ebebe8;"><span style="color:#77777b">    }</span></span><span class="ln" style="left:18.5px;top:307.1px;">52</span><span class="ln" style="left:18.5px;top:325.2px;">53</span><svg style="left:57.20px;top:330.68px" width="8" height="4.9"><path d="M0 0.2H8L4.0 4.4z" fill="#1f3c68"/></svg><span class="code" style="left:76.60000000000002px;top:325.2px;-webkit-text-stroke:0.45px #fcfcfd;"><span style="color:#866a8c">    SequentialAnimation</span><span style="color:#77777b"> {</span></span><span class="ln" style="left:20px;top:343.2px;color:#5a5a5e;font-weight:700;">54</span><span class="code" style="left:76.60000000000002px;top:343.2px;-webkit-text-stroke:0.45px #cce8f4;"><span style="color:#77777b">        id: </span><i style="color:#4a4a4e;background:#dfe1e4;box-shadow:0 0 0 1px #c4c6ca;-webkit-text-stroke:0.45px #dfe1e4;">finalAnimation</i></span><span class="ln" style="left:18.5px;top:361.3px;">55</span><span class="ln" style="left:18.5px;top:379.4px;">56</span><svg style="left:57.20px;top:384.86px" width="8" height="4.9"><path d="M0 0.2H8L4.0 4.4z" fill="#1f3c68"/></svg><span class="code" style="left:76.60000000000002px;top:379.4px;-webkit-text-stroke:0.45px #fcfcfd;"><span style="color:#866a8c">        PropertyAction</span><span style="color:#77777b"> {</span></span><span class="ln" style="left:18.5px;top:397.4px;">57</span><span class="code" style="left:76.60000000000002px;top:397.4px;-webkit-text-stroke:0.45px #fcfcfd;"><span style="color:#8a6a6c">            target</span><span style="color:#77777b">: </span><i style="color:#4a4a4e">applicationFlow</i></span><span class="ln" style="left:18.5px;top:415.5px;">58</span><span class="code" style="left:76.60000000000002px;top:415.5px;-webkit-text-stroke:0.45px #fcfcfd;"><span style="color:#8a6a6c">            property</span><span style="color:#77777b">: </span><span style="color:#7a9a80">"state"</span></span><span class="ln" style="left:18.5px;top:433.5px;">59</span><span class="code" style="left:76.60000000000002px;top:433.5px;-webkit-text-stroke:0.45px #fcfcfd;"><span style="color:#8a6a6c">            value</span><span style="color:#77777b">: </span><span style="color:#7a9a80">"finished"</span></span><span class="ln" style="left:18.5px;top:451.6px;">60</span><span class="code" style="left:76.60000000000002px;top:451.6px;-webkit-text-stroke:0.45px #fcfcfd;"><span style="color:#77777b">        }</span></span><span class="ln" style="left:18.5px;top:469.7px;">61</span><span class="ln" style="left:18.5px;top:487.7px;">62</span><svg style="left:57.20px;top:493.22px" width="8" height="4.9"><path d="M0 0.2H8L4.0 4.4z" fill="#1f3c68"/></svg><span class="code" style="left:76.60000000000002px;top:487.7px;-webkit-text-stroke:0.45px #fcfcfd;"><span style="color:#866a8c">        PauseAnimation</span><span style="color:#77777b"> {</span></span><span class="ln" style="left:18.5px;top:505.8px;">63</span><span class="code" style="left:76.60000000000002px;top:505.8px;-webkit-text-stroke:0.45px #fcfcfd;"><span style="color:#8a6a6c">            duration</span><span style="color:#77777b">: </span><span style="color:#6a6a98">1000</span></span><span class="ln" style="left:18.5px;top:523.8px;">64</span><span class="code" style="left:76.60000000000002px;top:523.8px;-webkit-text-stroke:0.45px #fcfcfd;"><span style="color:#77777b">        }</span></span><span class="ln" style="left:18.5px;top:541.9px;">65</span><span class="ln" style="left:18.5px;top:560.0px;">66</span><svg style="left:57.20px;top:565.46px" width="8" height="4.9"><path d="M0 0.2H8L4.0 4.4z" fill="#1f3c68"/></svg><span class="code" style="left:76.60000000000002px;top:560.0px;-webkit-text-stroke:0.45px #fcfcfd;"><span style="color:#866a8c">        PropertyAction</span><span style="color:#77777b"> {</span></span><span class="ln" style="left:18.5px;top:578.0px;">67</span><span class="code" style="left:76.60000000000002px;top:578.0px;-webkit-text-stroke:0.45px #fcfcfd;"><span style="color:#8a6a6c">            target</span><span style="color:#77777b">: </span><i style="color:#4a4a4e">applicationFlow</i></span><span class="ln" style="left:18.5px;top:596.1px;">68</span><span class="code" style="left:76.60000000000002px;top:596.1px;-webkit-text-stroke:0.45px #fcfcfd;"><span style="color:#8a6a6c">            property</span><span style="color:#77777b">: </span><span style="color:#7a9a80">"state"</span></span><span class="ln" style="left:18.5px;top:614.1px;">69</span><span class="code" style="left:76.60000000000002px;top:614.1px;-webkit-text-stroke:0.45px #fcfcfd;"><span style="color:#8a6a6c">            value</span><span style="color:#77777b">: </span><span style="color:#7a9a80">"start"</span></span><span class="ln" style="left:18.5px;top:632.2px;">70</span><span class="code" style="left:76.60000000000002px;top:632.2px;-webkit-text-stroke:0.45px #fcfcfd;"><span style="color:#77777b">        }</span></span><span class="ln" style="left:18.5px;top:650.3px;">71</span><span class="ln" style="left:18.5px;top:668.3px;">72</span><svg style="left:57.20px;top:673.82px" width="8" height="4.9"><path d="M0 0.2H8L4.0 4.4z" fill="#1f3c68"/></svg><span class="code" style="left:76.60000000000002px;top:668.3px;-webkit-text-stroke:0.45px #fcfcfd;"><span style="color:#866a8c">        PauseAnimation</span><span style="color:#77777b"> {</span></span><span class="ln" style="left:18.5px;top:686.4px;">73</span><span class="code" style="left:76.60000000000002px;top:686.4px;-webkit-text-stroke:0.45px #fcfcfd;"><span style="color:#8a6a6c">            duration</span><span style="color:#77777b">: </span><i style="color:#4a4a4e">applicationFlow</i><span style="color:#77777b">.animationDuration</span></span><span class="ln" style="left:18.5px;top:704.4px;">74</span><span class="code" style="left:76.60000000000002px;top:704.4px;-webkit-text-stroke:0.45px #fcfcfd;"><span style="color:#77777b">        }</span></span><span class="ln" style="left:18.5px;top:722.5px;">75</span><span class="ln" style="left:18.5px;top:740.6px;">76</span><svg style="left:57.20px;top:746.06px" width="8" height="4.9"><path d="M0 0.2H8L4.0 4.4z" fill="#1f3c68"/></svg><span class="code" style="left:76.60000000000002px;top:740.6px;-webkit-text-stroke:0.45px #fcfcfd;"><span style="color:#866a8c">        PauseAnimation</span><span style="color:#77777b"> {</span></span><span class="ln" style="left:18.5px;top:758.6px;">77</span><span class="code" style="left:76.60000000000002px;top:758.6px;-webkit-text-stroke:0.45px #fcfcfd;"><span style="color:#8a6a6c">            duration</span><span style="color:#77777b">: </span><span style="color:#6a6a98">400</span></span><span class="ln" style="left:18.5px;top:776.7px;">78</span><span class="code" style="left:76.60000000000002px;top:776.7px;-webkit-text-stroke:0.45px #fcfcfd;"><span style="color:#77777b">        }</span></span><span class="ln" style="left:18.5px;top:794.7px;">79</span><span class="ln" style="left:18.5px;top:812.8px;">80</span><svg style="left:57.20px;top:818.30px" width="8" height="4.9"><path d="M0 0.2H8L4.0 4.4z" fill="#1f3c68"/></svg><span class="code" style="left:76.60000000000002px;top:812.8px;-webkit-text-stroke:0.45px #fcfcfd;"><span style="color:#866a8c">        PropertyAction</span><span style="color:#77777b"> {</span></span><span class="ln" style="left:18.5px;top:830.9px;">81</span><span class="code" style="left:76.60000000000002px;top:830.9px;-webkit-text-stroke:0.45px #fcfcfd;"><span style="color:#8a6a6c">            target</span><span style="color:#77777b">: </span><i style="color:#4a4a4e">applicationFlow</i></span><div class="a" style="left:1402px;top:0;width:14px;height:844px;background:#f8f8f8;"></div><div class="a" style="left:1403px;top:12px;width:13px;height:241px;background:#e3e3e3;"></div><div class="a" style="left:1403px;top:575px;width:13px;height:253px;background:#e3e3e3;"></div><svg style="left:1404px;top:5px" width="9" height="6"><path d="M0 5.5L4.5 0.5L9 5.5z" fill="#47494d"/></svg><svg style="left:1404px;top:832px" width="9" height="6"><path d="M0 0.5L4.5 5.5L9 0.5z" fill="#47494d"/></svg><div class="a" style="left:1405px;top:43px;width:10px;height:7px;background:#e0434d;"></div><div class="a" style="left:1405px;top:385px;width:10px;height:6px;background:#3a3a3c;"></div></div><div class="a dark" style="left:397px;top:918px;width:1416px;height:26px;"></div><span class="t" style="left:401.4px;top:923.8px;color:#f2f2f2;letter-spacing:0.513px;">Application Output</span><div class="a" style="left:548px;top:922px;width:1px;height:18px;background:#595b5f;"></div><svg style="left:559px;top:923px" width="17" height="16" viewBox="0 0 17 16"><path d="M4 1h2.2v5H4z" fill="#c8c8ca"/><path d="M1.5 6.5h7l1 6.5h-9z" fill="#c8c8ca"/><path d="M10.5 9.5h5.5v4.5h-5.5z" fill="none" stroke="#c8c8ca" stroke-width="1.2"/></svg><svg style="left:589px;top:926px" width="10" height="10" fill="none" stroke="#4e5054" stroke-width="1.8"><path d="M1 7L5 3L9 7"/></svg><svg style="left:612px;top:926px" width="10" height="10" fill="none" stroke="#4e5054" stroke-width="1.8"><path d="M1 3L5 7L9 3"/></svg><svg style="left:636px;top:923px" width="13" height="16"><path d="M0.5 0.5L12.5 8L0.5 15.5z" fill="#8fc46e"/></svg><div class="a" style="left:662px;top:925px;width:12px;height:12px;background:#54565a;"></div><svg style="left:687px;top:923px" width="14" height="16"><path d="M0.5 0.5L12.5 8L0.5 15.5z" fill="#505256"/><rect x="6" y="8" width="7" height="7" fill="#5a5c60"/></svg><svg style="left:711px;top:923px" width="16" height="16" viewBox="0 0 16 16"><circle cx="8" cy="8" r="4.6" fill="none" stroke="#c8c8ca" stroke-width="2.2"/><g stroke="#c8c8ca" stroke-width="2.4"><path d="M8 0.3V3M8 13v2.7M0.3 8H3M13 8h2.7M2.5 2.5l2 2M11.5 11.5l2 2M2.5 13.5l2-2M11.5 4.5l2-2"/></g></svg><div class="a" style="left:732px;top:919px;width:166px;height:24px;background:#fbfbfc;"></div><svg style="left:739px;top:924px" width="14" height="14" fill="none" stroke="#8e9094" stroke-width="1.4"><circle cx="8.5" cy="5" r="3.8"/><path d="M5.8 7.8L1.5 12.5"/><path d="M11 11.5h3" stroke-width="1"/></svg><span class="t" style="left:761.0px;top:923.3px;color:#a4a6aa;letter-spacing:0.055px;">Filter</span><svg style="left:903px;top:924px" width="14" height="14" stroke="#e2e2e4" stroke-width="2.2"><path d="M7 0.5V13.5M0.5 7H13.5"/></svg><div class="a" style="left:929px;top:930px;width:13px;height:2px;background:#e2e2e4;"></div><svg style="left:1768px;top:927px" width="12" height="8" fill="none" stroke="#8e9094" stroke-width="1.5"><path d="M1 6.5L6 1.5L11 6.5"/></svg><svg style="left:1794px;top:926px" width="13" height="11" fill="none" stroke="#c8c8ca" stroke-width="1.3"><rect x="0.7" y="0.7" width="11.6" height="9.6"/><path d="M4 4.5h5L6.5 7.5z" fill="#c8c8ca" stroke="none"/></svg><div class="a" style="left:397px;top:944px;width:1416px;height:32px;background:#ececee;"></div><div class="a" style="left:397px;top:975px;width:1416px;height:1px;background:#d0d0d4;"></div><div class="a" style="left:397px;top:944px;width:130px;height:33px;background:#fcfcfd;"></div><span class="t" style="left:409.6px;top:953.5px;color:#424246;letter-spacing:0.225px;">coffee_insight</span><svg style="left:494px;top:954px" width="15" height="14"><rect x="0.5" y="0.5" width="14" height="13" rx="2" fill="#ef7a6a" stroke="#d85c4e"/><path d="M4.5 4L10.5 10M10.5 4L4.5 10" stroke="#fbe3df" stroke-width="1.4"/></svg><div class="a" style="left:527px;top:946px;width:153px;height:30px;background:#e2e2e6;box-shadow:inset 0 0 0 1px #cfd0d6;"></div><span class="t" style="left:539.0px;top:954.0px;color:#505054;letter-spacing:0.363px;">animationexample</span><svg style="left:649px;top:954px" width="15" height="14"><rect x="0.5" y="0.5" width="14" height="13" rx="2" fill="#d4d4d8" stroke="#b4b4ba"/><path d="M4.5 4L10.5 10M10.5 4L4.5 10" stroke="#ececf0" stroke-width="1.4"/></svg><div class="a" style="left:397px;top:976px;width:1416px;height:79px;background:#fcfcfd;overflow:hidden;"><span class="code" style="left:4px;top:2.1px;color:#77777b;-webkit-text-stroke:0.4px #fcfcfd;">qt.insight.storage: Added a new event</span><span class="code" style="left:4px;top:20.0px;color:#d87682;-webkit-text-stroke:0.4px #fcfcfd;">QML debugging is enabled. Only use this in a safe environment.</span><span class="code" style="left:4px;top:37.9px;color:#7c7cd0;font-weight:700;-webkit-text-stroke:0.2px #fcfcfd;">18:47:20: C:\Qt\Examples\Qt-6.6.0\insighttracker\build-coffee-Desktop_Qt_6_6_0_MinGW_64_bit-Debug\coffee_insight.exe exited with code 0</span><div class="a" style="left:1402px;top:0;width:14px;height:79px;background:#f8f8f8;"></div><div class="a" style="left:1403px;top:13px;width:13px;height:21px;background:#e1e1e4;"></div><svg style="left:1404px;top:5px" width="9" height="6"><path d="M0 5.5L4.5 0.5L9 5.5z" fill="#47494d"/></svg><svg style="left:1404px;top:69px" width="9" height="6"><path d="M0 0.5L4.5 5.5L9 0.5z" fill="#47494d"/></svg></div><div class="a dark" style="left:76px;top:1054px;width:1737px;height:26px;"></div><div class="a" style="left:77px;top:1058px;width:32px;height:22px;background:#2c2e30;"></div><svg style="left:83px;top:1063px" width="13" height="12"><rect x="0.7" y="0.7" width="11.6" height="10.6" fill="none" stroke="#d0d0d2" stroke-width="1.4"/><rect x="1" y="1" width="5" height="10" fill="#d0d0d2"/></svg><div class="a" style="left:110px;top:1058px;width:212px;height:22px;background:#f6f6f7;"></div><svg style="left:116px;top:1063px" width="14" height="14" fill="none" stroke="#8e9094" stroke-width="1.4"><circle cx="8.5" cy="5" r="3.8"/><path d="M5.8 7.8L1.5 12.5"/><path d="M11 11.5h3" stroke-width="1"/></svg><span class="t" style="left:139.0px;top:1062.6px;color:#a0a2a6;letter-spacing:0.186px;">Type to locate (Ctrl+K)</span><div class="a" style="left:512px;top:1057px;width:130px;height:23px;background:#262829;"></div><span class="t" style="left:336.6px;top:1062.9px;color:#e9e9ea;">1</span><span class="t" style="left:350.2px;top:1062.9px;color:#e9e9ea;letter-spacing:-0.248px;">Issues</span><span class="t" style="left:401.6px;top:1062.9px;color:#e9e9ea;">2</span><span class="t" style="left:416.0px;top:1062.9px;color:#e9e9ea;letter-spacing:-0.048px;">Search Results</span><span class="t" style="left:515.8px;top:1062.9px;color:#e9e9ea;">3</span><span class="t" style="left:530.6px;top:1062.9px;color:#e9e9ea;letter-spacing:0.474px;">Application Output</span><span class="t" style="left:656.0px;top:1062.9px;color:#e9e9ea;">4</span><span class="t" style="left:670.5px;top:1062.9px;color:#e9e9ea;letter-spacing:0.409px;">Compile Output</span><span class="t" style="left:778.6px;top:1062.9px;color:#e9e9ea;">5</span><span class="t" style="left:792.8px;top:1062.9px;color:#e9e9ea;letter-spacing:0.105px;">Terminal</span><span class="t" style="left:859.3px;top:1062.9px;color:#e9e9ea;">6</span><span class="t" style="left:873.0px;top:1062.9px;color:#e9e9ea;letter-spacing:0.327px;">QML Debugger Console</span><span class="t" style="left:1027.2px;top:1062.9px;color:#e9e9ea;">7</span><span class="t" style="left:1041.3px;top:1062.9px;color:#e9e9ea;">General Messages</span><span class="t" style="left:1160.0px;top:1062.9px;color:#e9e9ea;">8</span><span class="t" style="left:1174.8px;top:1062.9px;color:#e9e9ea;letter-spacing:0.324px;">Version Control</span><span class="t" style="left:1279.0px;top:1062.9px;color:#e9e9ea;">9</span><span class="t" style="left:1294.6px;top:1062.9px;color:#e9e9ea;letter-spacing:-0.172px;">Test Results</span><span class="t" style="left:1374.3px;top:1062.9px;color:#e9e9ea;letter-spacing:0.036px;">10 Squish</span><svg style="left:1450.5px;top:1064.0px" width="7" height="11" fill="#c4c4c6"><path d="M3.5 0.3L7 4.4H0z"/><path d="M3.5 10.7L7 6.6H0z"/></svg><div class="a" style="left:1722px;top:1058px;width:31px;height:22px;background:#2c2e30;"></div><svg style="left:1728px;top:1060px" width="17" height="14"><rect x="0.5" y="8" width="15.5" height="4.500" rx="2.200" fill="#d0d0d2"/><circle cx="12" cy="10.200" r="1.300" fill="#55575a"/><path d="M12.400 0.800L14.400 4.200H10.400z" fill="#d0d0d2"/></svg><div class="a" style="left:1755px;top:1058px;width:25px;height:22px;background:#2c2e30;"></div><svg style="left:1761px;top:1062px" width="13" height="12" fill="none" stroke="#d0d0d2" stroke-width="1.700"><path d="M1 12V6a5.500 5.500 0 0 1 11 0V12"/><path d="M3.500 3v4.500l3-2.500l3 2.500V3" stroke-width="1.300"/></svg><svg style="left:1794px;top:1063px" width="13" height="12"><rect x="0.7" y="0.7" width="11.6" height="10.6" fill="none" stroke="#d0d0d2" stroke-width="1.4"/><rect x="7" y="1" width="5" height="10" fill="#d0d0d2"/></svg></div></body></html>
